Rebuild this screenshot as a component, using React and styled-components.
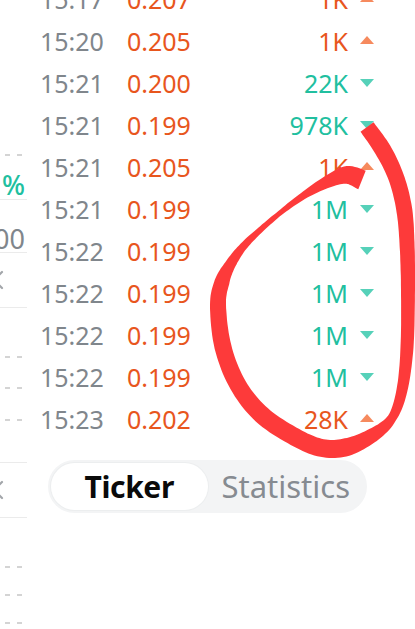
import React from "react";
import styled, { createGlobalStyle } from "styled-components";

const GlobalStyle = createGlobalStyle`
  html, body {
    margin: 0;
    padding: 0;
    background: #ffffff;
    overflow: hidden;
  }
  body {
    font-family: "Noto Sans", "Liberation Sans", sans-serif;
    -webkit-font-smoothing: antialiased;
  }
`;

const COLORS = {
  up: "#e8561d",
  upArrow: "#f68a5e",
  down: "#21bf9f",
  downArrow: "#56d1b9",
  muted: "#80868c",
  line: "#ebebeb",
  dash: "#d4d4d4",
};

const trades = [
  { time: "15:17", price: "0.207", vol: "1K", side: "up" },
  { time: "15:20", price: "0.205", vol: "1K", side: "up" },
  { time: "15:21", price: "0.200", vol: "22K", side: "down" },
  { time: "15:21", price: "0.199", vol: "978K", side: "down" },
  { time: "15:21", price: "0.205", vol: "1K", side: "up" },
  { time: "15:21", price: "0.199", vol: "1M", side: "down" },
  { time: "15:22", price: "0.199", vol: "1M", side: "down" },
  { time: "15:22", price: "0.199", vol: "1M", side: "down" },
  { time: "15:22", price: "0.199", vol: "1M", side: "down" },
  { time: "15:22", price: "0.199", vol: "1M", side: "down" },
  { time: "15:23", price: "0.202", vol: "28K", side: "up" },
];

/* ---------- page frame ---------- */

const Screen = styled.div`
  position: relative;
  width: 415px;
  height: 629px;
  overflow: hidden;
  display: flex;
  background: #fff;
`;

/* ---------- clipped order-book column on the left ---------- */

const BookEdge = styled.div`
  width: 27px;
  flex: none;
  overflow: hidden;
  display: flex;
  flex-direction: column;
  padding-top: ${(p) => p.$top}px;
`;

const Slot = styled.div`
  height: ${(p) => p.$h}px;
  padding-top: ${(p) => p.$pt || 0}px;
  box-sizing: border-box;
  flex: none;
  display: flex;
  align-items: center;
  justify-content: ${(p) => (p.$start ? "flex-start" : "flex-end")};
  white-space: nowrap;
`;

const Divider = styled.div`
  height: 1px;
  flex: none;
  background: ${COLORS.line};
`;

const DashPair = styled.div`
  width: 27px;
  display: flex;
  gap: 7px;
  padding-left: 5px;
  box-sizing: border-box;
  justify-content: flex-start;

  span {
    width: 5px;
    height: 2px;
    background: ${COLORS.dash};
  }
`;

const Percent = styled.span`
  font-size: 27px;
  font-weight: 500;
  color: ${COLORS.down};
  line-height: 1;
  margin-right: 2px;
`;

const EdgeValue = styled.span`
  font-size: 27px;
  color: ${COLORS.muted};
  line-height: 1;
  margin-right: 2px;
`;

const CloseMark = styled.svg`
  flex: none;
  width: 20px;
  height: 20px;
  margin-left: -16px;
`;

const Dashes = () => (
  <DashPair>
    <span />
    <span />
  </DashPair>
);

const Close = () => (
  <CloseMark viewBox="0 0 20 20">
    <path d="M2 2 18 18M18 2 2 18" stroke="#a3a6aa" strokeWidth="2.2" strokeLinecap="round" fill="none" />
  </CloseMark>
);

/* ---------- trade ticker ---------- */

const Main = styled.div`
  flex: 1;
  display: flex;
  flex-direction: column;
  padding-left: 13px;
`;

const TradeList = styled.div`
  margin-top: -22px;
  display: flex;
  flex-direction: column;
`;

const TradeRow = styled.div`
  height: 42px;
  display: flex;
  align-items: center;
  font-size: 25px;
  line-height: 1;
  white-space: nowrap;
`;

const Time = styled.span`
  width: 87px;
  flex: none;
  color: ${COLORS.muted};
`;

const Price = styled.span`
  flex: 1;
  color: ${COLORS.up};
`;

const Volume = styled.span`
  color: ${(p) => (p.$side === "up" ? COLORS.up : COLORS.down)};
  text-align: right;
`;

const Arrow = styled.span`
  flex: none;
  width: 0;
  height: 0;
  margin-left: 12px;
  margin-right: 41px;
  border-left: 7px solid transparent;
  border-right: 7px solid transparent;
  ${(p) =>
    p.$side === "up"
      ? `border-bottom: 8px solid ${COLORS.upArrow}; margin-top: -3px;`
      : `border-top: 8px solid ${COLORS.downArrow}; margin-top: -1px;`}
`;

/* ---------- segmented tabs ---------- */

const Tabs = styled.div`
  margin-top: 20px;
  margin-left: 8px;
  width: 319px;
  height: 53px;
  box-sizing: border-box;
  padding: 3px;
  border-radius: 27px;
  background: #f3f4f5;
  display: grid;
  grid-template-columns: 1fr 1fr;
`;

const Tab = styled.div`
  border-radius: 24px;
  display: flex;
  align-items: center;
  justify-content: center;
  font-size: ${(p) => (p.$active ? 30 : 31)}px;
  line-height: 1;
  color: ${(p) => (p.$active ? "#0a0a0a" : "#868b91")};
  font-weight: ${(p) => (p.$active ? 700 : 400)};
  letter-spacing: ${(p) => (p.$active ? "-0.4px" : "0")};
  background: ${(p) => (p.$active ? "#ffffff" : "transparent")};
  box-shadow: ${(p) => (p.$active ? "0 0 0 1px #eceeef" : "none")};
`;

/* ---------- hand-drawn marker stroke ---------- */

const Ink = styled.svg`
  position: absolute;
  left: 0;
  top: 0;
  width: 415px;
  height: 629px;
  pointer-events: none;
`;

// centre line of the pen stroke: x, y, width
const STROKE = [
  [367, 127, 16],
  [383, 150, 17],
  [396, 177, 16],
  [404, 208, 16],
  [407, 243, 15],
  [408, 290, 14],
  [407, 347, 13],
  [402, 390, 11],
  [392, 418, 9],
  [373, 435, 14],
  [347, 447, 18],
  [322, 448, 18],
  [295, 437, 18],
  [262, 415, 18],
  [238, 385, 17],
  [223, 347, 17],
  [218, 305, 16],
  [222, 282, 15],
  [230, 265, 11],
  [242, 248, 8],
  [258, 232, 6],
  [280, 213, 5],
  [303, 196, 7],
  [327, 182, 12],
  [347, 175, 18],
  [362, 180, 20],
];

function outline(pts, steps = 10) {
  const dense = [];
  const n = pts.length;
  for (let i = 0; i < n - 1; i++) {
    const p0 = pts[Math.max(i - 1, 0)];
    const p1 = pts[i];
    const p2 = pts[i + 1];
    const p3 = pts[Math.min(i + 2, n - 1)];
    for (let s = 0; s < steps; s++) {
      const t = s / steps;
      const t2 = t * t;
      const t3 = t2 * t;
      const cr = (a, b, c, d) =>
        0.5 * (2 * b + (-a + c) * t + (2 * a - 5 * b + 4 * c - d) * t2 + (-a + 3 * b - 3 * c + d) * t3);
      dense.push([cr(p0[0], p1[0], p2[0], p3[0]), cr(p0[1], p1[1], p2[1], p3[1]), p1[2] + (p2[2] - p1[2]) * t]);
    }
  }
  dense.push(pts[n - 1]);
  const left = [];
  const right = [];
  dense.forEach((p, i) => {
    const a = dense[Math.max(i - 1, 0)];
    const b = dense[Math.min(i + 1, dense.length - 1)];
    let dx = b[0] - a[0];
    let dy = b[1] - a[1];
    const len = Math.hypot(dx, dy) || 1;
    dx /= len;
    dy /= len;
    const h = p[2] / 2;
    left.push([p[0] - dy * h, p[1] + dx * h]);
    right.push([p[0] + dy * h, p[1] - dx * h]);
  });
  const ring = left.concat(right.reverse());
  return "M" + ring.map(([x, y]) => `${x.toFixed(1)} ${y.toFixed(1)}`).join("L") + "Z";
}

const strokePath = outline(STROKE);

export default function App() {
  return (
    <>
      <GlobalStyle />
      <Screen>
        <BookEdge $top={140}>
          <Slot $h={30}>
            <Dashes />
          </Slot>
          <Slot $h={29}>
            <Percent>%</Percent>
          </Slot>
          <Divider />
          <Slot $h={52} $pt={24}>
            <EdgeValue>100</EdgeValue>
          </Slot>
          <Divider />
          <Slot $h={54} $start>
            <Close />
          </Slot>
          <Divider />
          <Slot $h={33} />
          <Slot $h={31.5}>
            <Dashes />
          </Slot>
          <Slot $h={31.5}>
            <Dashes />
          </Slot>
          <Slot $h={31.5}>
            <Dashes />
          </Slot>
          <Slot $h={26.5} />
          <Divider />
          <Slot $h={54} $start>
            <Close />
          </Slot>
          <Divider />
          <Slot $h={35} />
          <Slot $h={28}>
            <Dashes />
          </Slot>
          <Slot $h={28}>
            <Dashes />
          </Slot>
          <Slot $h={28}>
            <Dashes />
          </Slot>
        </BookEdge>

        <Main>
          <TradeList>
            {trades.map((t, i) => (
              <TradeRow key={i}>
                <Time>{t.time}</Time>
                <Price>{t.price}</Price>
                <Volume $side={t.side}>{t.vol}</Volume>
                <Arrow $side={t.side} />
              </TradeRow>
            ))}
          </TradeList>
          <Tabs>
            <Tab $active>Ticker</Tab>
            <Tab>Statistics</Tab>
          </Tabs>
        </Main>

        <Ink viewBox="0 0 415 629">
          <path d={strokePath} fill="#fd3a3a" />
        </Ink>
      </Screen>
    </>
  );
}
